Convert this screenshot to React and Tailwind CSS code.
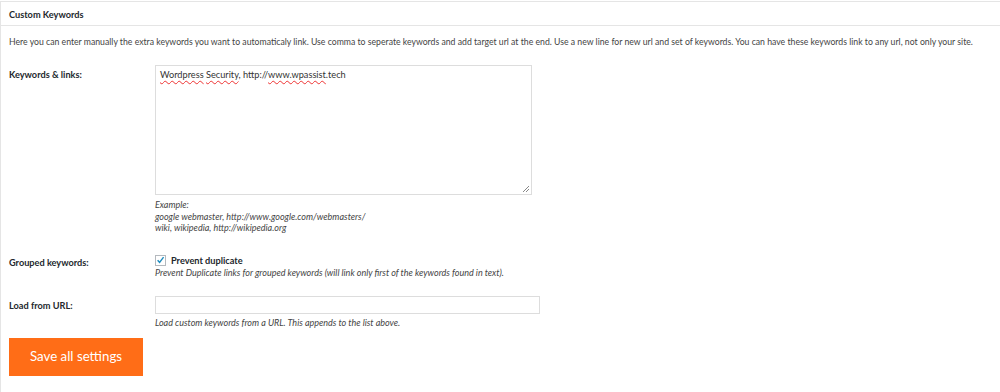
export default function App() {
  const font = { fontFamily: 'Lato, "Open Sans", sans-serif' };
  const sp = "underline decoration-wavy decoration-[#e33] decoration-[1px] underline-offset-[2px]";
  return (
    <div className="w-[1000px] h-[392px] bg-white overflow-hidden text-[#333]" style={font}>
      <div className="border-t border-l border-[#e5e5e5] mt-[1px] h-full">
        <div className="h-[24px] flex items-center px-[8px] pt-[3px] border-b border-[#e5e5e5] text-[9.2px] font-bold text-[#23282d]">
          Custom Keywords
        </div>
        <div className="px-[8px] pt-[9px] text-[8.7px] text-[#444] leading-[14px] whitespace-nowrap">
          Here you can enter manually the extra keywords you want to automaticaly link. Use comma to seperate keywords and add target url at the end. Use a new line for new url and set of keywords. You can have these keywords link to any url, not only your site.
        </div>
        <div className="flex pl-[8px] mt-[16px]">
          <div className="w-[146px] pt-[3px] text-[9.2px] font-bold text-[#23282d]">Keywords &amp; links:</div>
          <div className="flex flex-col">
            <div className="relative w-[377px] h-[130px] border border-[#ddd] px-[4px] py-[2px] text-[9.2px] text-[#333] leading-[14px]">
              <span className={sp}>Wordpress</span> <span className={sp}>Security</span>, http://<span className={sp}>www.wpassist</span>.tech
              <svg className="absolute right-[1px] bottom-[1px]" width="8" height="8" viewBox="0 0 8 8">
                <path d="M7 1 L1 7 M7 4 L4 7" stroke="#888" strokeWidth="1" />
              </svg>
            </div>
            <div className="mt-[4px] text-[9px] italic text-[#444] leading-[11.5px]">
              <div>Example:</div>
              <div>google webmaster, http://www.google.com/webmasters/</div>
              <div>wiki, wikipedia, http://wikipedia.org</div>
            </div>
          </div>
        </div>
        <div className="flex pl-[8px] mt-[20px]">
          <div className="w-[146px] pt-[2px] text-[9.2px] font-bold text-[#23282d]">Grouped keywords:</div>
          <div className="flex flex-col">
            <div className="flex items-center gap-[5px]">
              <div className="w-[11px] h-[11px] border border-[#b4b9be] bg-white flex items-center justify-center">
                <svg width="10" height="10" viewBox="0 0 10 10">
                  <path d="M1.8 5.2 L4 7.6 L8.4 1.8" stroke="#1e8cbe" strokeWidth="1.6" fill="none" />
                </svg>
              </div>
              <span className="text-[9.2px] font-bold text-[#23282d]">Prevent duplicate</span>
            </div>
            <div className="text-[9px] italic text-[#444] leading-[12px]">
              Prevent Duplicate links for grouped keywords (will link only first of the keywords found in text).
            </div>
          </div>
        </div>
        <div className="flex pl-[8px] mt-[17px]">
          <div className="w-[146px] pt-[3px] text-[9.2px] font-bold text-[#23282d]">Load from URL:</div>
          <div className="flex flex-col">
            <input className="w-[385px] h-[18px] border border-[#ddd] outline-none" />
            <div className="mt-[3px] text-[9px] italic text-[#444] leading-[12px]">
              Load custom keywords from a URL. This appends to the list above.
            </div>
          </div>
        </div>
        <div className="pl-[8px] mt-[9px]">
          <button className="w-[134px] h-[38px] bg-[#ff6d17] text-white text-[13.3px]">Save all settings</button>
        </div>
      </div>
    </div>
  );
}
